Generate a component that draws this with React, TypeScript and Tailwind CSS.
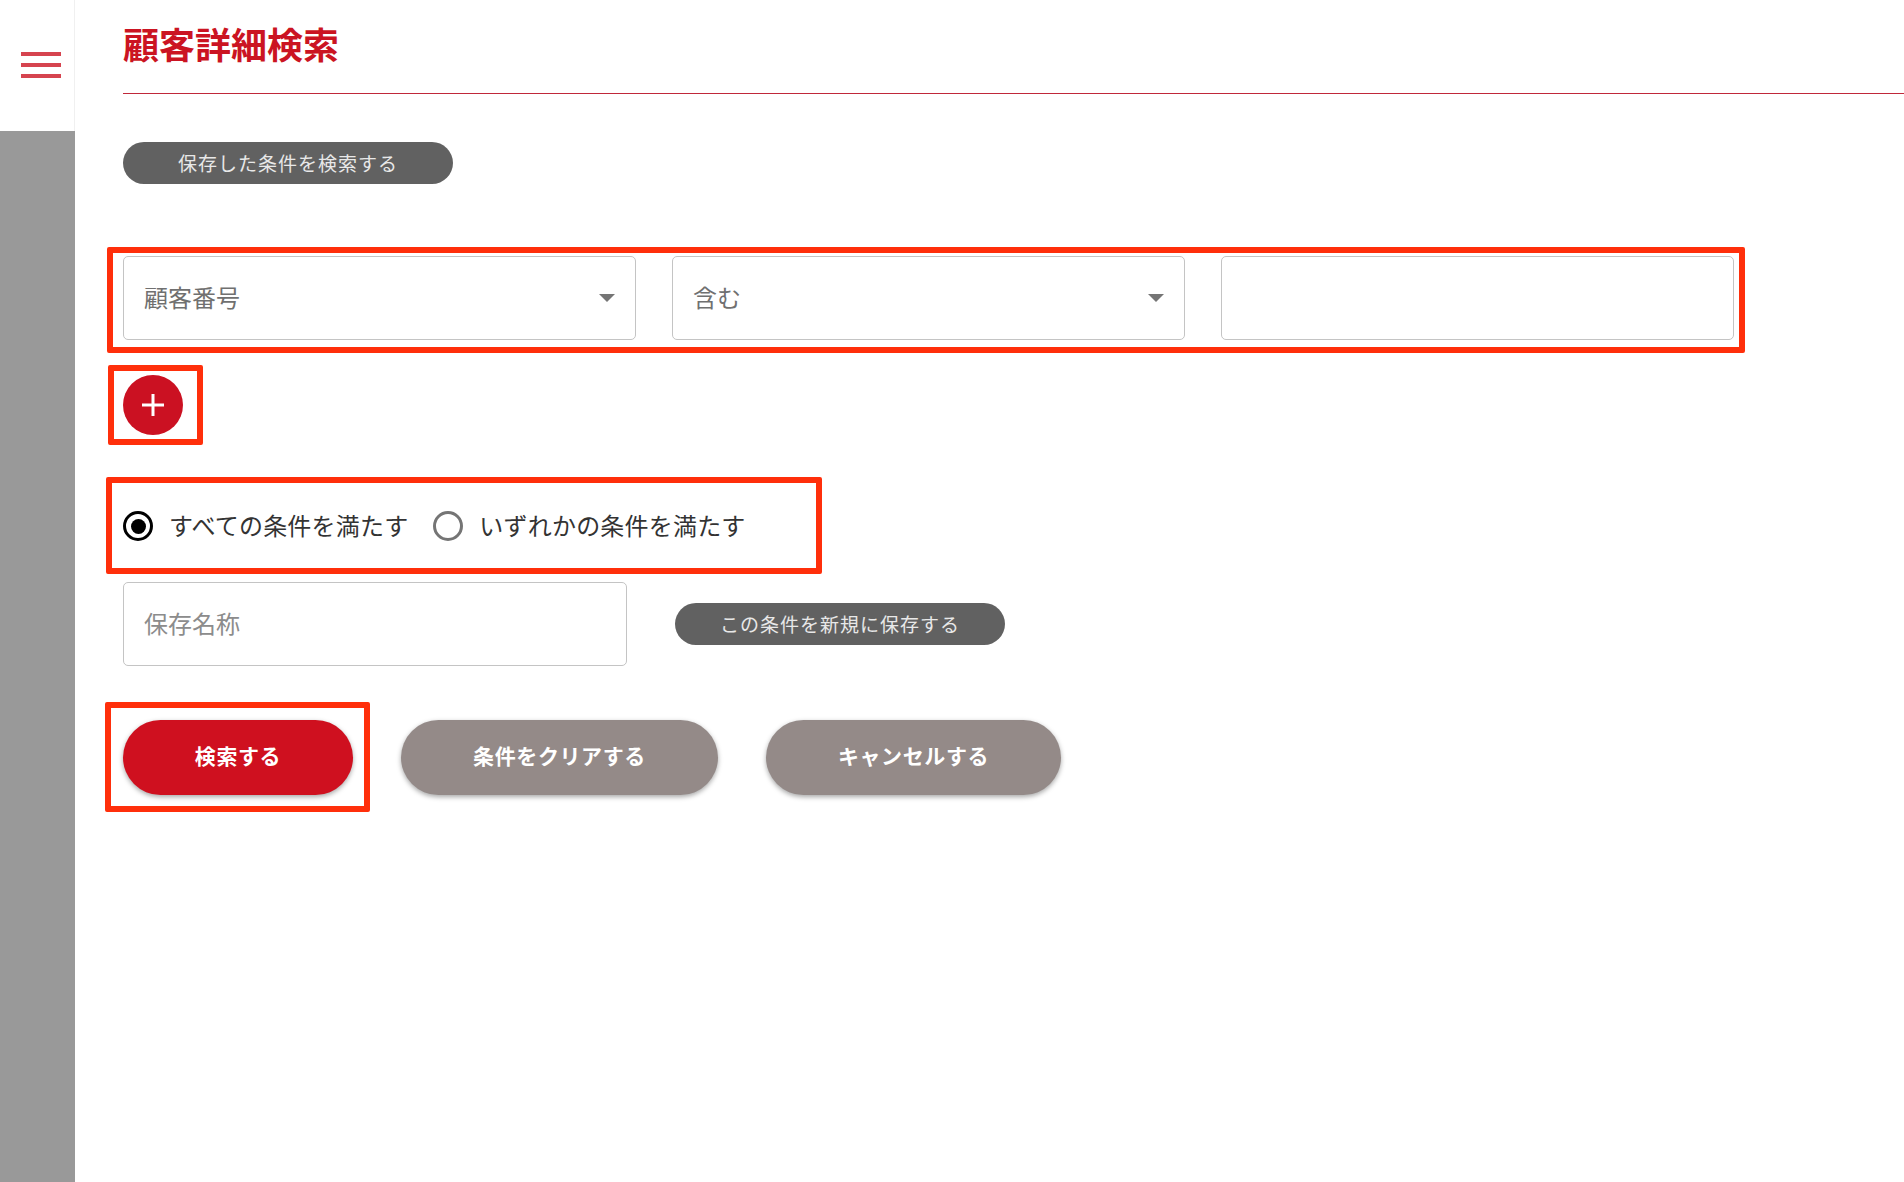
const jp = 'font-["Noto_Sans_CJK_JP","Noto_Sans",sans-serif]';

function Frame({ className }: { className: string }) {
  // red annotation drawn over the form
  return <div className={`pointer-events-none absolute rounded-[2px] border-[6px] border-[#ff2f0b] ${className}`} />;
}

function SelectBox({ label }: { label: string }) {
  return (
    <div className="flex h-[84px] w-[513px] items-center justify-between rounded-[5px] border border-[#c4c4c4] bg-white pl-[20px] pr-[20px]">
      <span className="pb-[2px] text-[24px] text-[#707070]">{label}</span>
      <span className="h-0 w-0 border-x-[8px] border-t-[8px] border-x-transparent border-t-[#757575]" />
    </div>
  );
}

function Radio({ label, checked }: { label: string; checked?: boolean }) {
  return (
    <label className="flex items-center gap-[16px]">
      <span
        className={`flex h-[30px] w-[30px] items-center justify-center rounded-full border-[3px] ${
          checked ? 'border-black' : 'border-[#757575]'
        }`}
      >
        {checked && <span className="h-[15px] w-[15px] rounded-full bg-black" />}
      </span>
      <span className="pb-[2px] text-[24px] leading-none tracking-[0.2px] text-[#333333]">{label}</span>
    </label>
  );
}

function DarkPill({ children, className }: { children: string; className: string }) {
  return (
    <button className={`flex h-[42px] items-center justify-center rounded-full bg-[#616161] text-[19px] tracking-[1px] text-[#e8e8e8] ${className}`}>
      {children}
    </button>
  );
}

function BigButton({ children, className }: { children: string; className: string }) {
  return (
    <button className={`h-[75px] rounded-[38px] pb-[3px] text-[21px] font-bold tracking-[0.6px] text-white shadow-[0_2px_5px_rgba(0,0,0,0.35)] ${className}`}>
      {children}
    </button>
  );
}

export default function App() {
  return (
    <div className={`flex min-h-screen bg-white ${jp}`}>
      <aside className="flex w-[75px] shrink-0 flex-col">
        <div className="flex h-[131px] flex-col gap-[6.5px] border-r border-[#f0f0f0] pl-[21px] pt-[51.5px]">
          <span className="h-[4.5px] w-[40px] bg-[#d6444f]" />
          <span className="h-[4.5px] w-[40px] bg-[#d6444f]" />
          <span className="h-[4.5px] w-[40px] bg-[#d6444f]" />
        </div>
        <div className="flex-1 bg-[#999999]" />
      </aside>

      <main className="min-w-0 flex-1 pl-[48px]">
        <div className="h-[94px] border-b border-[#c0283a]">
          <h1 className="pt-[20px] text-[36px] font-bold leading-[46px] text-[#cb1422]">顧客詳細検索</h1>
        </div>

        <DarkPill className="mt-[48px] w-[330px]">保存した条件を検索する</DarkPill>

        <div className="relative mt-[72px] flex w-fit gap-[36px]">
          <SelectBox label="顧客番号" />
          <SelectBox label="含む" />
          <input className="h-[84px] w-[513px] rounded-[5px] border border-[#c4c4c4] bg-white px-[21px] text-[24px] outline-none" />
          <Frame className="-bottom-[13px] -left-[16px] -right-[11px] -top-[9px]" />
        </div>

        <div className="relative mt-[35px] w-fit">
          <button className="flex h-[60px] w-[60px] items-center justify-center rounded-full bg-[#cb1122]">
            <svg width="22" height="22" viewBox="0 0 22 22" stroke="white" strokeWidth="3">
              <path d="M11 0v22M0 11h22" />
            </svg>
          </button>
          <Frame className="-bottom-[10px] -left-[15px] -right-[20px] -top-[10px]" />
        </div>

        <div className="relative mt-[76px] flex h-[30px] w-fit items-center gap-[25px]">
          <Radio label="すべての条件を満たす" checked />
          <Radio label="いずれかの条件を満たす" />
          <Frame className="-bottom-[33px] -left-[17px] -right-[76px] -top-[34px]" />
        </div>

        <div className="mt-[41px] flex items-center gap-[48px]">
          <input
            placeholder="保存名称"
            className="h-[84px] w-[504px] rounded-[5px] border border-[#c4c4c4] bg-white px-[20px] pb-[3px] text-[24px] outline-none placeholder:text-[#8c8c8c]"
          />
          <DarkPill className="w-[330px]">この条件を新規に保存する</DarkPill>
        </div>

        <div className="mt-[54px] flex gap-[48px]">
          <div className="relative">
            <BigButton className="w-[230px] bg-[#cf101f]">検索する</BigButton>
            <Frame className="-bottom-[17px] -left-[18px] -right-[17px] -top-[18px]" />
          </div>
          <BigButton className="w-[317px] bg-[#948a88]">条件をクリアする</BigButton>
          <BigButton className="w-[295px] bg-[#948a88]">キャンセルする</BigButton>
        </div>
      </main>
    </div>
  );
}
